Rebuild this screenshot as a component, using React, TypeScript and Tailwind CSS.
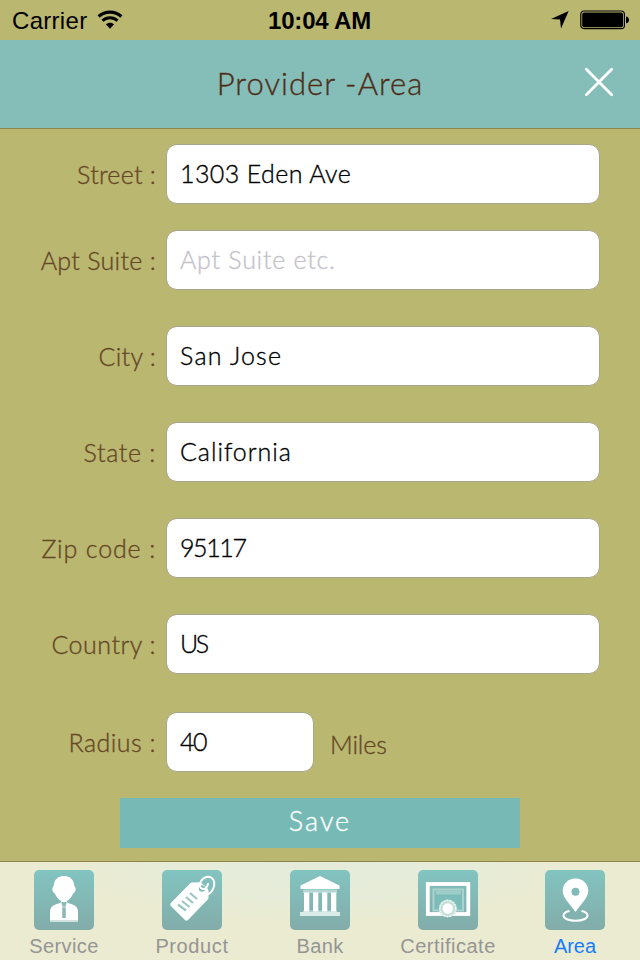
import type { ReactNode } from "react";

const fields = [
  { label: "Street :", value: "1303 Eden Ave", gap: "mt-[15px]", labelTrack: "tracking-[0.25px]", track: "tracking-[0.4px]" },
  { label: "Apt Suite :", placeholder: "Apt Suite etc.", gap: "mt-[26px]", labelTrack: "tracking-[0.3px]", track: "tracking-[0.75px]" },
  { label: "City :", value: "San Jose", gap: "mt-9", labelTrack: "tracking-[0.3px]", track: "tracking-[1.2px]" },
  { label: "State :", value: "California", gap: "mt-9", labelTrack: "tracking-[0.7px]", track: "tracking-[0.95px]" },
  { label: "Zip code :", value: "95117", gap: "mt-9", labelTrack: "tracking-[0.85px]", track: "tracking-[-1.4px]" },
  { label: "Country :", value: "US", gap: "mt-9", labelTrack: "tracking-[0.5px]", track: "tracking-[-2.4px]" },
  { label: "Radius :", value: "40", gap: "mt-[38px]", short: true, labelTrack: "tracking-[0.5px]", track: "tracking-[-1.6px]" },
];

function StatusBar() {
  return (
    <div className="flex h-10 items-center pl-3 pr-[11px] font-['Liberation_Sans',Arial,sans-serif] text-black">
      <div className="flex flex-1 items-center gap-[10px]">
        <span className="pt-[2px] text-[24px] leading-[38px] tracking-[0.3px]">Carrier</span>
        <svg width="26" height="20" viewBox="0 0 26 20" fill="none" stroke="black">
          <path d="M1.6 6.5C8 .7 18 .7 24.4 6.5" strokeWidth="3.2" />
          <path d="M5.4 10.7c4.4-4 10.8-4 15.2 0" strokeWidth="3" />
          <path d="M8.9 14.3c2.3-2.2 5.9-2.2 8.2 0L13 18.8z" fill="black" stroke="none" />
        </svg>
      </div>
      <span className="relative -left-px pt-[2px] text-[24px] font-bold leading-[38px] tracking-[-0.2px]">10:04 AM</span>
      <div className="flex flex-1 items-center justify-end gap-[11px]">
        <svg width="19" height="18" viewBox="0 0 19 18">
          <path d="M18.700 0 11 17.600 10 8.400 1 7.900z" />
        </svg>
        <svg width="49" height="20" viewBox="0 0 49 20">
          <rect x=".8" y="1" width="43.6" height="17.6" rx="3.2" fill="none" stroke="black" strokeWidth="1.2" />
          <rect x="2.2" y="2.4" width="40.8" height="14.8" rx="2" />
          <path d="M46 6.5c4 .3 4 6.5 0 6.8z" />
        </svg>
      </div>
    </div>
  );
}

function ServiceIcon() {
  return (
    <>
      <path fill="white" d="M30 6c5.500 0 9.500 3 10 8.500 0 1.500 1.700 2.500 1.700 4.500S40.500 22.500 39 24c-1.500 3-3.500 5.500-6 7v1.500c3 1.500 7 2 9 4 1.500 1.500 2 3.500 2 6V50H16v-7.500c0-2.500.5-4.500 2-6 2-2 6-2.500 9-4V31c-2.500-1.500-4.500-4-6-7-1.500-1.500-2.700-3-2.700-5s1.700-3 1.700-4.500C20.500 9 24.500 6 30 6z" />
      <path fill="#8bbab6" d="M27.500 32h5v2.500h-.7V48h-3.600V34.500h-.7z" />
      <path fill="#d9e8e4" d="M28 36.500h4v1h-4z" />
      <path fill="#d0e3df" d="M16 50h28v2H16z" />
    </>
  );
}

function ProductIcon() {
  return (
    <>
      <path fill="white" d="M28 13.500q.8-1 2-1l7-.3q1.500 0 2.500.8l6 5.500q1 1 1 2.500v6.500q0 1.300-1 2.200L26 50q-1.600 1.400-3 0L8.800 36q-1.400-1.500 0-3z" />
      <g stroke="#9cc6c1" strokeWidth="2.200">
        <path d="m16 34.500 8 6M20 31l7.500 6M24 27l7 6M28 23l7 6" />
      </g>
      <circle cx="40" cy="18.500" r="3.200" fill="#86bdb8" />
      <path d="M45.500 24.500c4.500-1.500 7.500-8 6.700-12.500C51.500 8 48 6.300 44.500 7c-4.500 1-7.500 6-6.500 9.500.8 2.500 4 3.500 6 1.500 1.500-1.500 2-3.500 2-5" fill="none" stroke="white" strokeWidth="2" />
    </>
  );
}

function BankIcon() {
  return (
    <>
      <path fill="white" d="m30 6 19.500 9.500V19h-39v-3.500z" />
      <path fill="#b5d7d4" d="M13 19.500h34V23H13zM13 40.500h34V43H13z" />
      <path fill="white" d="M14 22.500h5.300v19H14zM23 22.500h5.300v19H23zM32 22.500h5.300v19H32zM41 22.500h5.300v19H41z" />
      <path fill="#dbebe7" d="M10 42h40v4H10z" />
    </>
  );
}

function CertificateIcon() {
  return (
    <>
      <rect x="9.800" y="14" width="40.500" height="30" fill="none" stroke="white" strokeWidth="3.800" />
      <rect x="15.500" y="19.500" width="29.500" height="21" fill="#7dbdb9" stroke="#abd2ce" strokeWidth="2" />
      <path fill="#9fcdca" d="M18 20.500h25v4H18z" />
      <circle cx="29.800" cy="38.500" r="9" fill="#c4deda" />
      <circle cx="29.800" cy="38.500" r="8" fill="none" stroke="#eef5f2" strokeWidth="1.500" strokeDasharray="2 1" />
      <circle cx="29.800" cy="38.500" r="5.200" fill="white" />
    </>
  );
}

function AreaIcon() {
  return (
    <>
      <path fill="white" fillRule="evenodd" d="M30.500 8.500c7.500 0 12.800 5.500 12.800 12.500 0 6-5.800 11.500-12.800 21-7-9.500-12.800-15-12.800-21 0-7 5.300-12.500 12.800-12.500zm0 9.300a4 4 0 1 0 0 8 4 4 0 0 0 0-8z" />
      <path d="M24.500 41c-4 .8-6 2.600-6 4.500 0 3 5 5.200 12 5.200s12-2.200 12-5.200c0-1.900-2-3.700-6-4.500" fill="none" stroke="white" strokeWidth="2" />
    </>
  );
}

const tabs: { name: string; icon: ReactNode; active?: boolean; track: string }[] = [
  { name: "Service", icon: <ServiceIcon />, track: "tracking-[0.4px]" },
  { name: "Product", icon: <ProductIcon />, track: "tracking-[0.6px]" },
  { name: "Bank", icon: <BankIcon />, track: "tracking-[0.4px]" },
  { name: "Certificate", icon: <CertificateIcon />, track: "tracking-[0.5px]" },
  { name: "Area", icon: <AreaIcon />, active: true, track: "tracking-[-0.1px]" },
];

function TabBar() {
  return (
    <nav className="mt-[13px] flex h-[99px] border-t border-[#8d8549] bg-[#ebebd2] bg-[radial-gradient(ellipse_250px_60px_at_320px_0px,#e4ecda_0%,#e6ecd8_60%,#ebebd200_100%)]">
      {tabs.map((tab) => (
        <div key={tab.name} className={`flex w-32 flex-col items-center pt-2 ${tab.active ? "pr-[2px]" : ""}`}>
          <svg width="60" height="60" viewBox="0 0 60 60">
            <defs>
              <linearGradient id={`tile-${tab.name}`} x1="0" y1="0" x2="0" y2="1">
                <stop offset="0" stopColor="#82c4c0" />
                <stop offset="1" stopColor="#82aca9" />
              </linearGradient>
            </defs>
            <rect width="60" height="60" rx="5" fill={`url(#tile-${tab.name})`} />
            {tab.icon}
          </svg>
          <span
            className={`mt-1 font-['Liberation_Sans',Arial,sans-serif] text-[20px] font-normal leading-6 ${tab.track} ${
              tab.active ? "text-[#147efb]" : "text-[#959592]"
            }`}
          >
            {tab.name}
          </span>
        </div>
      ))}
    </nav>
  );
}

export default function App() {
  return (
    <div className="flex h-[960px] w-[640px] flex-col overflow-hidden bg-[#bab771] font-['Lato','Open_Sans',sans-serif] font-light">
      <StatusBar />
      <header className="grid h-[89px] grid-cols-[1fr_auto_1fr] items-center border-b border-[#8d8549] bg-[#85beb8] px-[26px]">
        <h1 className="col-start-2 pb-px text-[31px] leading-[87px] tracking-[1.05px] text-[#4e2d18] [-webkit-text-stroke:0.35px]">
          Provider -Area
        </h1>
        <svg className="mb-[5px] justify-self-end" width="30" height="30" viewBox="0 0 30 30" stroke="white" strokeWidth="2.800" strokeLinecap="round">
          <path d="m2.300 2.300 25.400 25.400M27.700 2.300 2.300 27.700" />
        </svg>
      </header>
      <main className="[-webkit-text-stroke:0.35px]">
        {fields.map((f) => (
          <div key={f.label} className={`flex h-[60px] items-center ${f.gap}`}>
            <label className={`w-[156px] whitespace-nowrap text-right text-[25px] leading-[30px] text-[#654726] ${f.labelTrack}`}>{f.label}</label>
            <div
              className={`ml-[10px] flex h-[60px] items-center rounded-[11px] border border-[#a9a78b] bg-white pb-[2px] pl-[13px] text-[25px] leading-[30px] ${
                f.short ? "w-[148px]" : "w-[434px]"
              } ${f.value ? "text-black" : "text-[#c3c3c9]"}`}
            >
              <span className={f.track}>{f.value ?? f.placeholder}</span>
            </div>
            {f.short && <span className="ml-4 mt-1 text-[25px] leading-[30px] tracking-[-0.1px] text-[#654726]">Miles</span>}
          </div>
        ))}
        <button className="mx-auto mt-[26px] block h-[50px] w-[400px] bg-[#77bab5] pb-[3px] text-[27px] font-light tracking-[2px] text-white">
          Save
        </button>
      </main>
      <TabBar />
    </div>
  );
}
